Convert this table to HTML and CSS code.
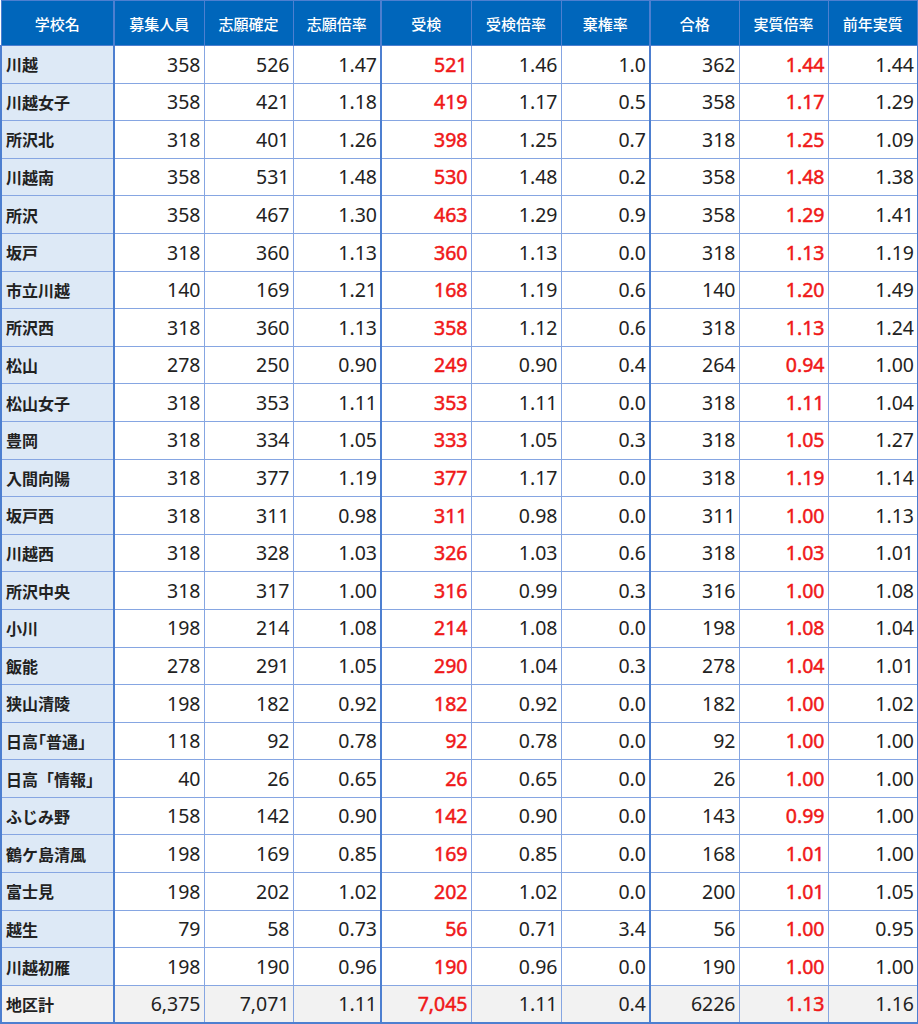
FILE: index.html
```html
<!DOCTYPE html>
<html lang="ja">
<head>
<meta charset="utf-8">
<link rel="stylesheet" href="styles.css">
</head>
<body>
<table class="t">
<colgroup>
<col class="c0"><col class="c1"><col class="c2"><col class="c3"><col class="c4"><col class="c5"><col class="c6"><col class="c7"><col class="c8"><col class="c9">
</colgroup>
<thead>
<tr><th>学校名</th><th class="g">募集人員</th><th>志願確定</th><th>志願倍率</th><th class="g">受検</th><th class="l">受検倍率</th><th>棄権率</th><th class="g">合格</th><th>実質倍率</th><th>前年実質</th></tr>
</thead>
<tbody>
<tr><td>川越</td><td class="g">358</td><td>526</td><td>1.47</td><td class="g r">521</td><td class="l">1.46</td><td>1.0</td><td class="g">362</td><td class="r">1.44</td><td>1.44</td></tr>
<tr><td>川越女子</td><td class="g">358</td><td>421</td><td>1.18</td><td class="g r">419</td><td class="l">1.17</td><td>0.5</td><td class="g">358</td><td class="r">1.17</td><td>1.29</td></tr>
<tr><td>所沢北</td><td class="g">318</td><td>401</td><td>1.26</td><td class="g r">398</td><td class="l">1.25</td><td>0.7</td><td class="g">318</td><td class="r">1.25</td><td>1.09</td></tr>
<tr><td>川越南</td><td class="g">358</td><td>531</td><td>1.48</td><td class="g r">530</td><td class="l">1.48</td><td>0.2</td><td class="g">358</td><td class="r">1.48</td><td>1.38</td></tr>
<tr><td>所沢</td><td class="g">358</td><td>467</td><td>1.30</td><td class="g r">463</td><td class="l">1.29</td><td>0.9</td><td class="g">358</td><td class="r">1.29</td><td>1.41</td></tr>
<tr><td>坂戸</td><td class="g">318</td><td>360</td><td>1.13</td><td class="g r">360</td><td class="l">1.13</td><td>0.0</td><td class="g">318</td><td class="r">1.13</td><td>1.19</td></tr>
<tr><td>市立川越</td><td class="g">140</td><td>169</td><td>1.21</td><td class="g r">168</td><td class="l">1.19</td><td>0.6</td><td class="g">140</td><td class="r">1.20</td><td>1.49</td></tr>
<tr><td>所沢西</td><td class="g">318</td><td>360</td><td>1.13</td><td class="g r">358</td><td class="l">1.12</td><td>0.6</td><td class="g">318</td><td class="r">1.13</td><td>1.24</td></tr>
<tr><td>松山</td><td class="g">278</td><td>250</td><td>0.90</td><td class="g r">249</td><td class="l">0.90</td><td>0.4</td><td class="g">264</td><td class="r">0.94</td><td>1.00</td></tr>
<tr><td>松山女子</td><td class="g">318</td><td>353</td><td>1.11</td><td class="g r">353</td><td class="l">1.11</td><td>0.0</td><td class="g">318</td><td class="r">1.11</td><td>1.04</td></tr>
<tr><td>豊岡</td><td class="g">318</td><td>334</td><td>1.05</td><td class="g r">333</td><td class="l">1.05</td><td>0.3</td><td class="g">318</td><td class="r">1.05</td><td>1.27</td></tr>
<tr><td>入間向陽</td><td class="g">318</td><td>377</td><td>1.19</td><td class="g r">377</td><td class="l">1.17</td><td>0.0</td><td class="g">318</td><td class="r">1.19</td><td>1.14</td></tr>
<tr><td>坂戸西</td><td class="g">318</td><td>311</td><td>0.98</td><td class="g r">311</td><td class="l">0.98</td><td>0.0</td><td class="g">311</td><td class="r">1.00</td><td>1.13</td></tr>
<tr><td>川越西</td><td class="g">318</td><td>328</td><td>1.03</td><td class="g r">326</td><td class="l">1.03</td><td>0.6</td><td class="g">318</td><td class="r">1.03</td><td>1.01</td></tr>
<tr><td>所沢中央</td><td class="g">318</td><td>317</td><td>1.00</td><td class="g r">316</td><td class="l">0.99</td><td>0.3</td><td class="g">316</td><td class="r">1.00</td><td>1.08</td></tr>
<tr><td>小川</td><td class="g">198</td><td>214</td><td>1.08</td><td class="g r">214</td><td class="l">1.08</td><td>0.0</td><td class="g">198</td><td class="r">1.08</td><td>1.04</td></tr>
<tr><td>飯能</td><td class="g">278</td><td>291</td><td>1.05</td><td class="g r">290</td><td class="l">1.04</td><td>0.3</td><td class="g">278</td><td class="r">1.04</td><td>1.01</td></tr>
<tr><td>狭山清陵</td><td class="g">198</td><td>182</td><td>0.92</td><td class="g r">182</td><td class="l">0.92</td><td>0.0</td><td class="g">182</td><td class="r">1.00</td><td>1.02</td></tr>
<tr><td>日高｢普通｣</td><td class="g">118</td><td>92</td><td>0.78</td><td class="g r">92</td><td class="l">0.78</td><td>0.0</td><td class="g">92</td><td class="r">1.00</td><td>1.00</td></tr>
<tr><td>日高「情報｣</td><td class="g">40</td><td>26</td><td>0.65</td><td class="g r">26</td><td class="l">0.65</td><td>0.0</td><td class="g">26</td><td class="r">1.00</td><td>1.00</td></tr>
<tr><td>ふじみ野</td><td class="g">158</td><td>142</td><td>0.90</td><td class="g r">142</td><td class="l">0.90</td><td>0.0</td><td class="g">143</td><td class="r">0.99</td><td>1.00</td></tr>
<tr><td>鶴ケ島清風</td><td class="g">198</td><td>169</td><td>0.85</td><td class="g r">169</td><td class="l">0.85</td><td>0.0</td><td class="g">168</td><td class="r">1.01</td><td>1.00</td></tr>
<tr><td>富士見</td><td class="g">198</td><td>202</td><td>1.02</td><td class="g r">202</td><td class="l">1.02</td><td>0.0</td><td class="g">200</td><td class="r">1.01</td><td>1.05</td></tr>
<tr><td>越生</td><td class="g">79</td><td>58</td><td>0.73</td><td class="g r">56</td><td class="l">0.71</td><td>3.4</td><td class="g">56</td><td class="r">1.00</td><td>0.95</td></tr>
<tr><td>川越初雁</td><td class="g">198</td><td>190</td><td>0.96</td><td class="g r">190</td><td class="l">0.96</td><td>0.0</td><td class="g">190</td><td class="r">1.00</td><td>1.00</td></tr>
<tr class="tot"><td>地区計</td><td class="g">6,375</td><td>7,071</td><td>1.11</td><td class="g r">7,045</td><td class="l">1.11</td><td>0.4</td><td class="g">6226</td><td class="r">1.13</td><td>1.16</td></tr>
</tbody>
</table>
</body>
</html>
```

FILE: styles.css
```css
html, body {
  margin: 0;
  padding: 0;
  background: #ffffff;
}
.t {
  border-collapse: collapse;
  table-layout: fixed;
  width: 917px;
  font-family: "Noto Sans", "Noto Sans CJK JP", sans-serif;
  color: #222222;
}
.c0 { width: 113px; }
.c1 { width: 90px; }
.c2 { width: 89px; }
.c3 { width: 88px; }
.c4 { width: 90px; }
.c5 { width: 90px; }
.c6 { width: 89px; }
.c7 { width: 89px; }
.c8 { width: 89px; }
.c9 { width: 90px; }
.t th {
  background: #0066bb;
  color: #ffffff;
  font-family: "Noto Sans CJK JP", sans-serif;
  font-weight: 500;
  font-size: 15px;
  height: 44px;
  padding: 0;
  border: 1px solid #4d7fd0;
  text-align: center;
}
.t td {
  height: 36.6px;
  padding: 0 3px 0 0;
  font-size: 19.5px;
  line-height: 1;
  text-align: right;
  border: 1px solid #86a6e2;
  background: #ffffff;
}
.t td:first-child {
  background: #dde9f6;
  text-align: left;
  padding: 0 0 0 4px;
  font-family: "Noto Sans CJK JP", sans-serif;
  font-size: 16px;
  font-weight: 700;
  border-left: 2px solid #4d7fd0;
}
.t td:last-child, .t th:last-child {
  border-right: 2px solid #4d7fd0;
}
.t .g { border-left: 2px solid #4d7fd0; }
.t .l { border-left: 1px solid #b5c8ee; }
.t .r { color: #f01818; font-weight: 400; -webkit-text-stroke: 0.5px #f01818; }
.t .tot td { background: #f2f2f2; border-bottom: 2px solid #4d7fd0; }
.t .tot td:first-child { background: #f2f2f2; }
```
